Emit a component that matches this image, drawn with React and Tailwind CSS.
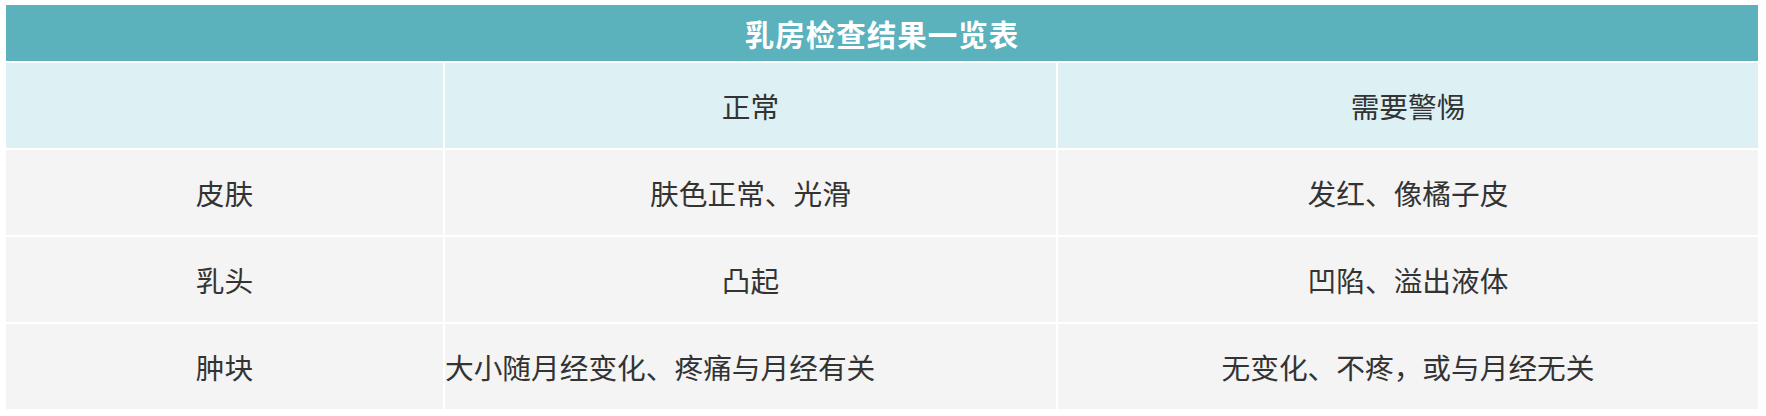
const rows = [
  { part: "皮肤", normal: "肤色正常、光滑", warn: "发红、像橘子皮" },
  { part: "乳头", normal: "凸起", warn: "凹陷、溢出液体" },
  { part: "肿块", normal: "大小随月经变化、疼痛与月经有关", warn: "无变化、不疼，或与月经无关", left: true },
];

export default function App() {
  return (
    <div
      className="w-[1766px] h-[416px] bg-white pl-[6px] pr-[8px] pt-[5px]"
      style={{ fontFamily: '"Noto Sans CJK SC", "Noto Sans", sans-serif' }}
    >
      <div className="grid grid-cols-[437px_611px_1fr] gap-[2px]">
        {/* Title */}
        <div className="col-span-3 h-[56px] bg-[#5cb2bc] flex items-center justify-center text-white text-[29.5px] font-bold tracking-[1px]">
          乳房检查结果一览表
        </div>

        {/* Column heads */}
        <div className="h-[85px] bg-[#ddf0f4]" />
        <div className="h-[85px] bg-[#ddf0f4] flex items-center justify-center text-[28.7px] text-[#333]">
          正常
        </div>
        <div className="h-[85px] bg-[#ddf0f4] flex items-center justify-center text-[28.7px] text-[#333]">
          需要警惕
        </div>

        {rows.map((r) => (
          <div key={r.part} className="contents">
            <div className="h-[85px] bg-[#f4f4f4] flex items-center justify-center text-[28.7px] text-[#333]">
              {r.part}
            </div>
            <div
              className={`h-[85px] bg-[#f4f4f4] flex items-center text-[28.7px] text-[#333] ${
                r.left ? "justify-start" : "justify-center"
              }`}
            >
              {r.normal}
            </div>
            <div className="h-[85px] bg-[#f4f4f4] flex items-center justify-center text-[28.7px] text-[#333]">
              {r.warn}
            </div>
          </div>
        ))}
      </div>
    </div>
  );
}
